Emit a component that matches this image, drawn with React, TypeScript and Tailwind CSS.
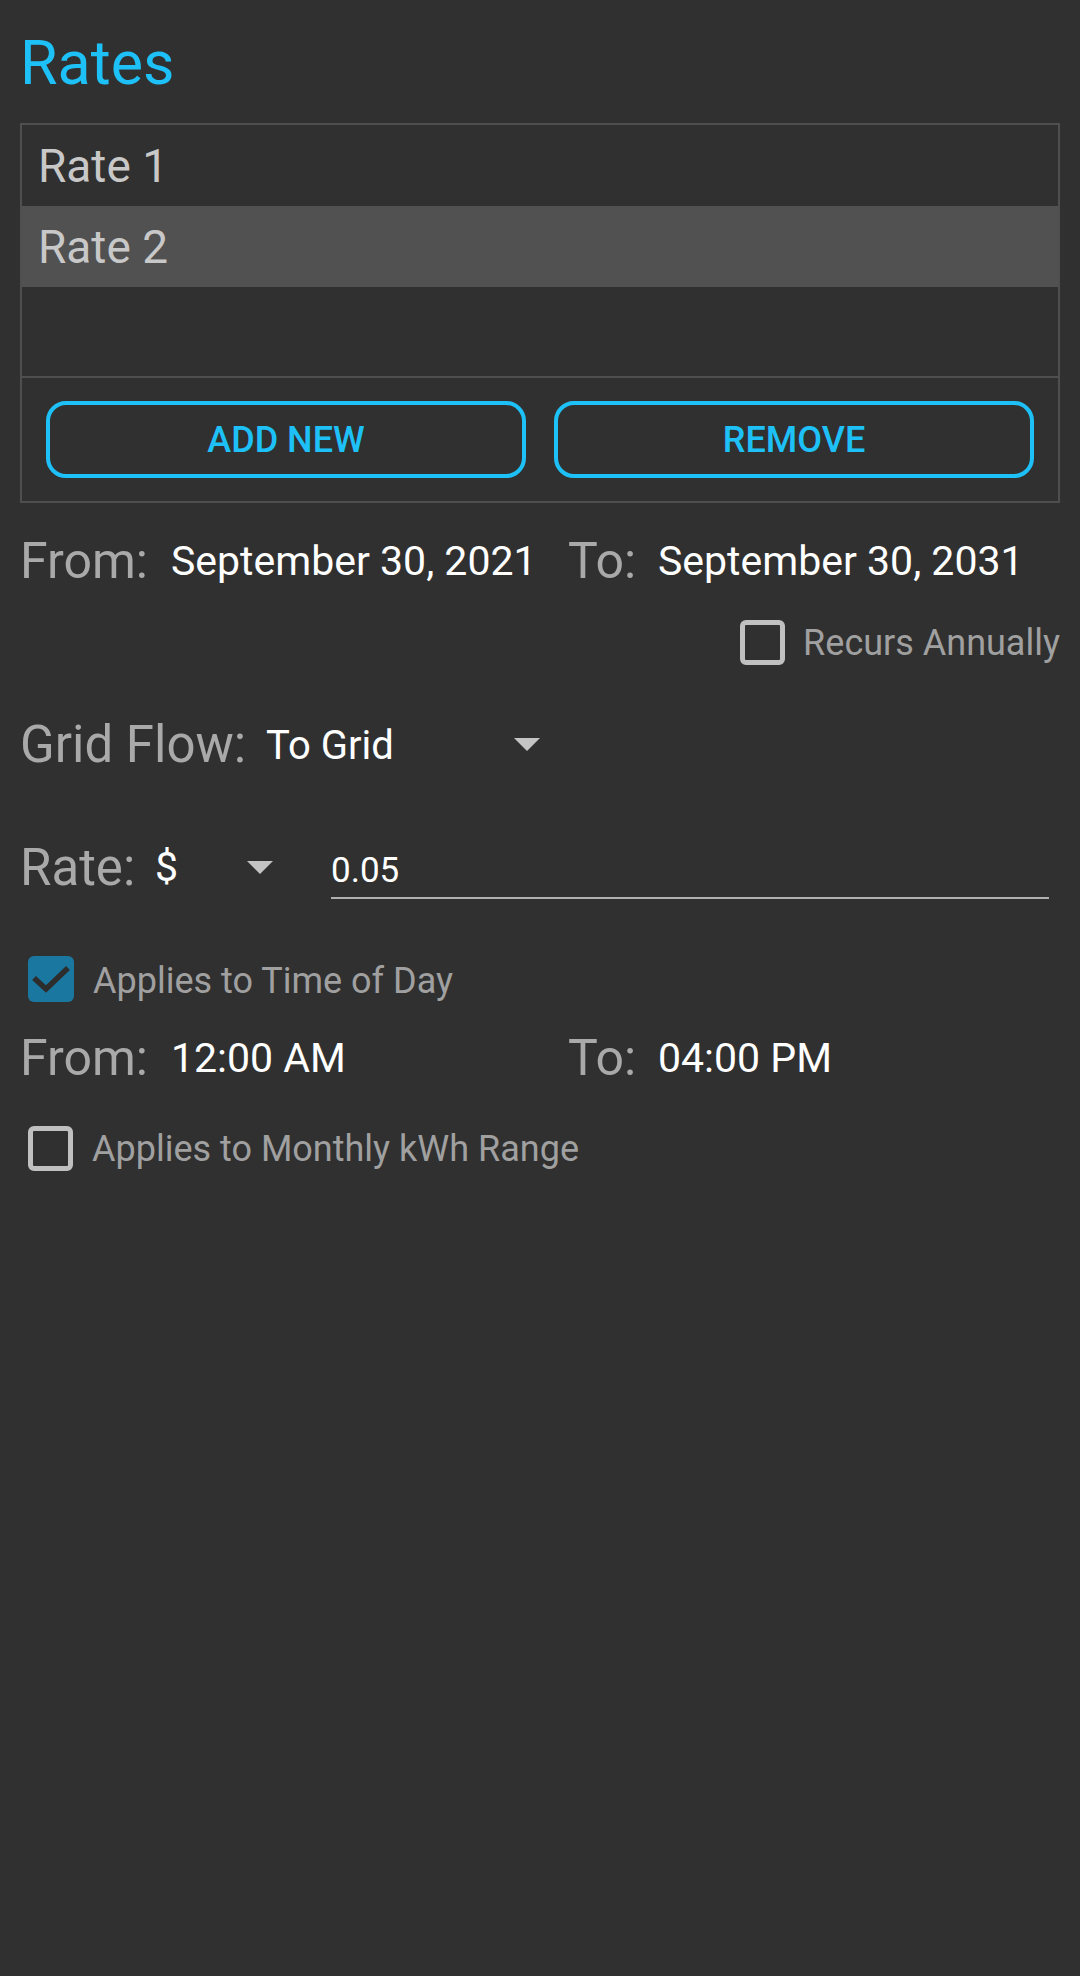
import React from "react";

const Tri = () => (
  <svg width="26" height="13" viewBox="0 0 26 13" className="block">
    <polygon points="0,0 26,0 13,13" fill="#c4c4c4" />
  </svg>
);

const Box = ({ checked }: { checked?: boolean }) =>
  checked ? (
    <div className="w-[46px] h-[46px] rounded-[6px] bg-[#1a78a0] flex items-center justify-center shrink-0">
      <svg width="46" height="46" viewBox="0 0 46 46">
        <polyline points="6,22 18,33 40,12" fill="none" stroke="#2d2d2d" strokeWidth="5.5" />
      </svg>
    </div>
  ) : (
    <div className="w-[45px] h-[45px] rounded-[6px] border-[5px] border-[#c0c0c0] shrink-0" />
  );

export default function App() {
  return (
    <div
      className="w-[1080px] h-[1976px] bg-[#303030] px-[20px] pt-[33px] flex flex-col"
      style={{ fontFamily: "Roboto, 'Noto Sans', sans-serif" }}
    >
      <div className="text-[61px] leading-none text-[#1ec1f7]">Rates</div>

      <div className="mt-[29px] border-[2px] border-[#4f4f4f] flex flex-col">
        <div className="h-[81px] flex items-center pl-[16px] text-[46px] leading-none text-[#c8c8c8]">Rate 1</div>
        <div className="h-[81px] flex items-center pl-[16px] text-[46px] leading-none text-[#c8c8c8] bg-[#515151]">Rate 2</div>
        <div className="h-[89px]" />
        <div className="border-t-[2px] border-[#4f4f4f] px-[24px] pt-[23px] pb-[23px] flex gap-[28px]">
          <div className="flex-1 h-[77px] border-[4px] border-[#1ec1f7] rounded-[20px] flex items-center justify-center text-[36px] font-medium leading-none text-[#1ec1f7]">
            ADD NEW
          </div>
          <div className="flex-1 h-[77px] border-[4px] border-[#1ec1f7] rounded-[20px] flex items-center justify-center text-[36px] font-medium leading-none text-[#1ec1f7]">
            REMOVE
          </div>
        </div>
      </div>

      <div className="mt-[28px] h-[60px] flex items-center">
        <span className="w-[151px] text-[50px] leading-none text-[#a9a9a9]">From:</span>
        <span className="w-[397px] text-[41px] leading-none text-white">September 30, 2021</span>
        <span className="w-[90px] text-[50px] leading-none text-[#a9a9a9]">To:</span>
        <span className="text-[41px] leading-none text-white">September 30, 2031</span>
      </div>

      <div className="mt-[29px] h-[45px] flex items-center justify-end gap-[18px]">
        <Box />
        <span className="text-[36px] leading-none text-[#a0a0a0]">Recurs Annually</span>
      </div>

      <div className="mt-[49px] h-[60px] flex items-center">
        <span className="w-[246px] text-[51px] leading-none text-[#a9a9a9]">Grid Flow:</span>
        <span className="w-[248px] text-[40px] leading-none text-white pt-[4px]">To Grid</span>
        <Tri />
      </div>

      <div className="mt-[61px] h-[64px] flex items-center">
        <span className="w-[135px] text-[51px] leading-none text-[#a9a9a9]">Rate:</span>
        <span className="w-[92px] text-[41px] leading-none text-white">$</span>
        <Tri />
        <div className="ml-[58px] w-[718px] self-stretch border-b-[2px] border-[#b0b0b0] flex items-center pt-[8px] text-[35px] leading-none text-white">
          0.05
        </div>
      </div>

      <div className="mt-[57px] h-[46px] flex items-center gap-[19px] pl-[8px]">
        <Box checked />
        <span className="text-[36px] leading-none text-[#a0a0a0] pt-[3px]">Applies to Time of Day</span>
      </div>

      <div className="mt-[26px] h-[60px] flex items-center">
        <span className="w-[151px] text-[50px] leading-none text-[#a9a9a9]">From:</span>
        <span className="w-[397px] text-[41px] leading-none text-white">12:00 AM</span>
        <span className="w-[90px] text-[50px] leading-none text-[#a9a9a9]">To:</span>
        <span className="text-[41px] leading-none text-white">04:00 PM</span>
      </div>

      <div className="mt-[38px] h-[45px] flex items-center gap-[19px] pl-[8px]">
        <Box />
        <span className="text-[36px] leading-none text-[#a0a0a0]">Applies to Monthly kWh Range</span>
      </div>
    </div>
  );
}
